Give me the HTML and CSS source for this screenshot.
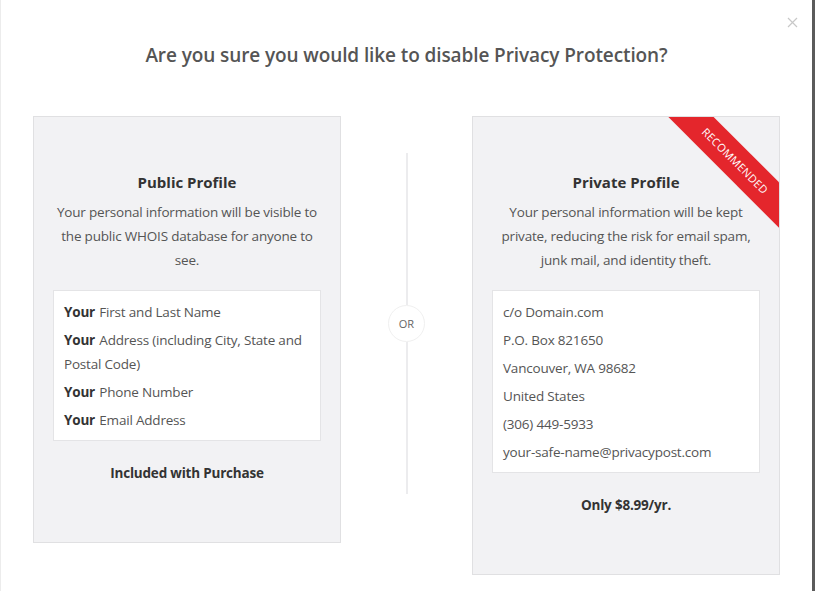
FILE: index.html
```html
<!DOCTYPE html>
<html>
<head>
<meta charset="utf-8">
<link rel="stylesheet" href="styles.css">
</head>
<body>
<div class="modal">
  <button class="close" aria-label="Close">
    <svg width="11" height="11" viewBox="0 0 11 11"><path d="M1 1L10 10M10 1L1 10" stroke="#c8c8c8" stroke-width="1.2" fill="none"/></svg>
  </button>
  <h1 class="title">Are you sure you would like to disable Privacy Protection?</h1>
  <div class="options">
    <section class="card">
      <h2 class="card-title">Public Profile</h2>
      <p class="card-desc">Your personal information will be visible to the public WHOIS database for anyone to see.</p>
      <ul class="info">
        <li><b>Your</b> First and Last Name</li>
        <li><b>Your</b> Address (including City, State and Postal Code)</li>
        <li><b>Your</b> Phone Number</li>
        <li><b>Your</b> Email Address</li>
      </ul>
      <p class="price">Included with Purchase</p>
    </section>
    <div class="divider">
      <span class="line"></span>
      <span class="or">OR</span>
      <span class="line"></span>
    </div>
    <section class="card">
      <div class="ribbon">RECOMMENDED</div>
      <h2 class="card-title">Private Profile</h2>
      <p class="card-desc">Your personal information will be kept private, reducing the risk for email spam, junk mail, and identity theft.</p>
      <ul class="info">
        <li>c/o Domain.com</li>
        <li>P.O. Box 821650</li>
        <li>Vancouver, WA 98682</li>
        <li>United States</li>
        <li>(306) 449-5933</li>
        <li>your-safe-name@privacypost.com</li>
      </ul>
      <p class="price">Only $8.99/yr.</p>
    </section>
  </div>
</div>
</body>
</html>
```

FILE: styles.css
```css
html, body {
  margin: 0;
  padding: 0;
}
body {
  background: #5b5b5b;
  width: 815px;
  height: 591px;
  overflow: hidden;
  font-family: "Open Sans", "Noto Sans", sans-serif;
}
.modal {
  position: relative;
  width: 812px;
  height: 591px;
  box-sizing: border-box;
  background: #fff;
  border-left: 1px solid #ececec;
  padding: 41px 0 0 32px;
}
.close {
  position: absolute;
  top: 17px;
  right: 14px;
  padding: 0;
  border: 0;
  background: none;
  width: 11px;
  height: 11px;
  display: block;
}
.close svg { display: block; }
.title {
  margin: 0;
  padding-right: 32px;
  text-align: center;
  font-size: 19px;
  line-height: 28px;
  letter-spacing: -0.1px;
  font-weight: 600;
  color: #555;
}
.options {
  display: flex;
  align-items: flex-start;
  margin-top: 47px;
}
.card {
  position: relative;
  overflow: hidden;
  width: 308px;
  box-sizing: border-box;
  background: #f2f2f4;
  border: 1px solid #e0e0e2;
  padding: 53px 19px 57px;
  text-align: center;
}
.card-title {
  margin: 0;
  font-size: 15px;
  line-height: 24px;
  font-weight: 700;
  color: #333;
}
.card-desc {
  margin: 6px 0 0;
  font-size: 13.5px;
  letter-spacing: -0.2px;
  line-height: 24px;
  color: #555;
}
.info {
  list-style: none;
  margin: 18px 0 0;
  padding: 9px 10px 8px;
  background: #fff;
  border: 1px solid #e4e4e6;
  text-align: left;
  font-size: 13.5px;
  letter-spacing: -0.2px;
  line-height: 24px;
  color: #555;
}
.info li + li { margin-top: 4px; }
.info b { color: #333; font-weight: 700; margin-right: 1px; }
.price {
  margin: 20px 0 0;
  font-size: 13.5px;
  letter-spacing: -0.2px;
  line-height: 24px;
  font-weight: 700;
  color: #333;
}
.divider {
  width: 131px;
  display: flex;
  flex-direction: column;
  align-items: center;
  padding-top: 37px;
}
.line {
  display: block;
  width: 2px;
  height: 152px;
  background: #ececee;
}
.or {
  width: 35px;
  height: 35px;
  border: 1px solid #f0f0f0;
  border-radius: 50%;
  background: #fff;
  display: flex;
  align-items: center;
  justify-content: center;
  font-size: 11px;
  color: #666;
}
.ribbon {
  position: absolute;
  top: 28px;
  right: -56px;
  width: 200px;
  height: 32px;
  line-height: 32px;
  background: #e4262c;
  color: #fff;
  font-size: 11px;
  letter-spacing: 0.3px;
  text-align: center;
  transform: rotate(45deg);
}
```
